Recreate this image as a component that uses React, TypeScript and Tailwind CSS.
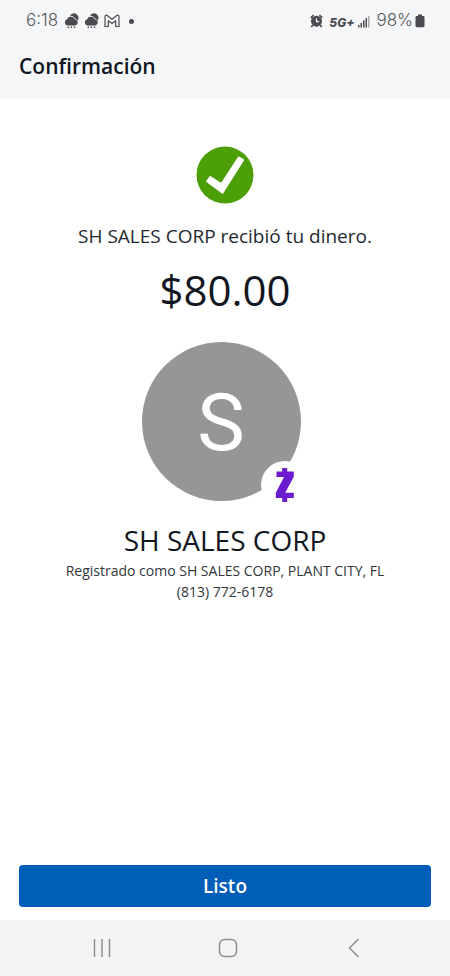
import React from "react";

function RainCloud() {
  return (
    <svg width="15" height="16" viewBox="0 0 15 16" fill="#4a4b4e" aria-hidden="true">
      <path d="M6 2.800a4.500 4.500 0 1 1 7.200 5.200A4.500 4.500 0 0 0 10.800 5.300 5 5 0 0 0 6 2.800z" />
      <path d="M3.300 12.500a3.300 3.300 0 0 1-.3-6.300 4.200 4.200 0 0 1 7.800-.1 3.300 3.300 0 0 1 .8 6.400z" />
      <path d="M3.600 13.500h1.400v1.500H3.600zM6.700 13.500h1.400v1.500H6.700zM9.800 13.500h1.400v1.500H9.800z" />
      <path d="M5.800 3.200a4.800 4.800 0 0 1 5 2.600 3.800 3.800 0 0 1 2.700 2.400" fill="none" stroke="#f5f6f8" strokeWidth="0.500" />
    </svg>
  );
}

function Gmail() {
  return (
    <svg width="16" height="14" viewBox="0 0 16 14" fill="none" stroke="#4a4b4e" strokeWidth="1.200" strokeLinejoin="round" aria-hidden="true">
      <path d="M1 12.500V2.500C1 1.200 2.300.8 3.200 1.500L8 5.200l4.800-3.700c.9-.7 2.200-.3 2.200 1v10h-3.300V6.800L8 9.600 4.300 6.800v5.700z" />
    </svg>
  );
}

function Alarm() {
  return (
    <svg width="13" height="14" viewBox="0 0 13 14" aria-hidden="true">
      <circle cx="6.500" cy="7.200" r="5.500" fill="#4a4b4e" />
      <path d="M.8 3.800 3.600 1.200M12.200 3.800 9.400 1.200M2.800 11.200 1.300 13M10.200 11.200l1.500 1.800" stroke="#4a4b4e" strokeWidth="1.800" />
      <path d="M6.500 4.200v3.400h2.600" stroke="#f5f6f8" strokeWidth="1.200" fill="none" />
    </svg>
  );
}

function Signal() {
  return (
    <svg width="12" height="13" viewBox="0 0 12 13" fill="#4a4b4e" aria-hidden="true">
      <path d="M0 10h1.500v2.500H0zM2.500 8H4v4.500H2.500zM5 5.500h1.500v7H5zM7.500 3H9v9.500H7.500z" />
      <path d="M10 1h1.500v11.500H10z" opacity=".45" />
    </svg>
  );
}

function Battery() {
  return (
    <svg width="10" height="14" viewBox="0 0 10 14" fill="#4a4b4e" aria-hidden="true">
      <path d="M3 .5h4V2h1.300Q9.500 2 9.500 3.200v8.600Q9.500 13.200 8.200 13.200H1.800Q.5 13.200 .5 11.800V3.200Q.5 2 1.700 2H3z" />
    </svg>
  );
}

function StatusBar() {
  return (
    <div className="flex h-[42px] items-center justify-between pr-[25px] pl-[26px] font-['Inter',sans-serif] text-[17px] text-[#55565a]">
      <div className="flex items-center gap-[5px]">
        <span className="mr-px font-light">6:18</span>
        <RainCloud />
        <RainCloud />
        <Gmail />
        <span className="ml-1 size-[5px] rounded-full bg-[#4a4b4e]" />
      </div>
      <div className="flex items-center">
        <Alarm />
        <span className="mt-1 ml-[6px] text-xs font-extrabold text-[#4a4b4e] italic">5G+</span>
        <span className="ml-1"><Signal /></span>
        <span className="ml-[6px] font-light">98%</span>
        <span className="ml-[2px]"><Battery /></span>
      </div>
    </div>
  );
}

function Avatar() {
  return (
    <div className="relative mt-6 mr-2 size-[159px]">
      <div className="flex size-full items-center justify-center rounded-full bg-[#969696] pt-[2px] font-['Roboto',sans-serif] text-[80px] text-white">
        S
      </div>
      <div className="absolute -right-2 -bottom-2 flex size-12 items-center justify-center rounded-full bg-white">
        <svg width="20" height="34" viewBox="0 0 20 34" fill="#6b1ccf" role="img" aria-label="Zelle">
          <path d="M7.200 0h5v3.500h6.600v5.300L10.200 24.800h8.600V30h-6.600v4h-5v-4H.8v-5.200L9 9H1.500V3.500h5.700z" />
        </svg>
      </div>
    </div>
  );
}

function NavBar() {
  return (
    <nav className="grid h-14 grid-cols-3 place-items-center bg-[#f4f4f7] pr-[33px] pl-[39px]">
      <button type="button" aria-label="Recientes">
        <svg width="18" height="20" viewBox="0 0 18 20" stroke="#8e8e92" strokeWidth="1.500">
          <path d="M1.500 1v18M9 1v18M16.500 1v18" />
        </svg>
      </button>
      <button type="button" aria-label="Inicio">
        <svg width="20" height="20" viewBox="0 0 20 20" fill="none" stroke="#8e8e92" strokeWidth="1.500">
          <rect x="1.500" y="1.500" width="17" height="17" rx="5" />
        </svg>
      </button>
      <button type="button" aria-label="Atrás">
        <svg width="12" height="20" viewBox="0 0 12 20" fill="none" stroke="#8e8e92" strokeWidth="1.500">
          <path d="M10.500 1 1.500 10l9 9" />
        </svg>
      </button>
    </nav>
  );
}

export default function App() {
  return (
    <div className="flex min-h-screen flex-col bg-white font-['Open_Sans',sans-serif] text-[#12171f]">
      <header className="bg-[#f5f6f8] pb-[9px]">
        <StatusBar />
        <h1 className="px-[19px] text-[21px] leading-[48px] font-semibold">Confirmación</h1>
      </header>
      <main className="flex flex-1 flex-col items-center pt-[47px] text-center">
        <svg width="58" height="58" viewBox="0 0 58 58" role="img" aria-label="Completado">
          <circle cx="29" cy="29" r="28.500" fill="#4c9f06" />
          <path
            d="M47.300 14 42.700 11.200 25.300 38 14.300 30.800 10.800 35.300 26.500 47z"
            fill="#fff"
            stroke="#fff"
            strokeWidth="1.500"
            strokeLinejoin="round"
          />
        </svg>
        <p className="mt-[18px] text-[19px] leading-7 text-[#25292f]">SH SALES CORP recibió tu dinero.</p>
        <p className="mt-3 text-[42px] leading-[56px]">$80.00</p>
        <Avatar />
        <h2 className="mt-[19px] text-[28px] leading-10">SH SALES CORP</h2>
        <p className="text-sm leading-[21px] text-[#33363b]">Registrado como SH SALES CORP, PLANT CITY, FL</p>
        <p className="text-sm leading-[21px] text-[#33363b]">(813) 772-6178</p>
      </main>
      <div className="px-[19px] pb-[13px]">
        <button type="button" className="h-[42px] w-full rounded bg-[#005eb8] text-[19px] font-semibold text-white">
          Listo
        </button>
      </div>
      <NavBar />
    </div>
  );
}
